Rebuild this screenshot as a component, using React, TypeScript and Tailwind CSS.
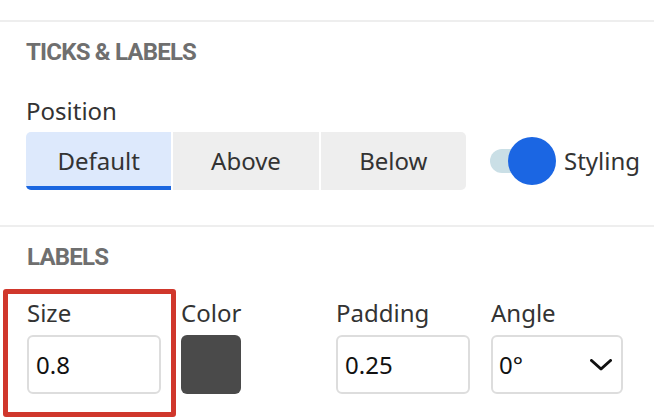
import React from "react";

const segments = ["Default", "Above", "Below"];

function Field({ label, children }: { label: string; children: React.ReactNode }) {
  return (
    <div className="flex w-[134px] flex-col">
      <span className="text-[24px] leading-[24px] text-[#333333]">{label}</span>
      <div className="mt-[10px]">{children}</div>
    </div>
  );
}

function TextBox({ value }: { value: string }) {
  return (
    <div className="flex h-[59px] w-[134px] items-center rounded-[6px] border-2 border-[#dddddd] bg-white pl-[7px] text-[24px] text-[#111111]">
      {value}
    </div>
  );
}

export default function App() {
  return (
    <div
      className="h-[418px] w-[654px] overflow-hidden bg-white"
      style={{ fontFamily: "'Noto Sans', Roboto, sans-serif" }}
    >
      <div className="h-[20px]" />
      <div className="h-[2px] bg-[#eeeeee]" />

      {/* ticks & labels */}
      <section className="px-[26px] pt-[18px]">
        <h2 className="font-['Roboto',sans-serif] text-[24px] font-bold uppercase leading-[24px] tracking-[-0.8px] text-[#6f6f6f]">
          Ticks &amp; Labels
        </h2>
        <div className="mt-[35px] text-[24px] leading-[24px] text-[#333333]">Position</div>
        <div className="mt-[9px] flex items-center">
          <div className="flex h-[58px] w-[440px] shrink-0 gap-[2px] overflow-hidden rounded-[5px]">
            {segments.map((s, i) => (
              <div
                key={s}
                className={
                  i === 0
                    ? "flex flex-1 items-center justify-center border-b-4 border-[#1a66e0] bg-[#dde9fc] pt-[4px] text-[24px] text-[#333333]"
                    : "flex flex-1 items-center justify-center bg-[#eeeeee] text-[24px] text-[#333333]"
                }
              >
                {s}
              </div>
            ))}
          </div>
          <div className="ml-[24px] flex shrink-0 items-center">
            <div className="relative h-[48px] w-[66px]">
              <div className="absolute left-0 top-[12px] h-[24px] w-[46px] rounded-full bg-[#cadfe6]" />
              <div className="absolute right-0 top-0 h-[48px] w-[48px] rounded-full bg-[#1b66e3]" />
            </div>
            <span className="ml-[8px] text-[24px] text-[#333333]">Styling</span>
          </div>
        </div>
      </section>

      <div className="mt-[35px] h-[2px] bg-[#eeeeee]" />

      {/* labels */}
      <section className="pl-[27px] pt-[18px]">
        <h2 className="font-['Roboto',sans-serif] text-[24px] font-bold uppercase leading-[24px] tracking-[-0.8px] text-[#6f6f6f]">
          Labels
        </h2>
        <div className="mt-[32px] grid grid-cols-[154px_155px_155px_134px]">
          <div className="relative">
            <div className="pointer-events-none absolute left-[-24px] top-[-12px] h-[128px] w-[173px] rounded-[3px] border-[5px] border-[#d0372c]" />
            <Field label="Size">
              <TextBox value="0.8" />
            </Field>
          </div>
          <Field label="Color">
            <div className="h-[59px] w-[60px] rounded-[6px] bg-[#4a4a4a]" />
          </Field>
          <Field label="Padding">
            <TextBox value="0.25" />
          </Field>
          <Field label="Angle">
            <div className="flex h-[59px] w-[132px] items-center justify-between rounded-[6px] border-2 border-[#dddddd] bg-white pl-[6px] pr-[9px] text-[24px] text-[#111111]">
              <span>0°</span>
              <svg width="22" height="12" viewBox="0 0 22 12" fill="none">
                <polyline points="1.5,1.5 11,10 20.5,1.5" stroke="#111111" strokeWidth="3" strokeLinecap="round" strokeLinejoin="round" />
              </svg>
            </div>
          </Field>
        </div>
      </section>
    </div>
  );
}
